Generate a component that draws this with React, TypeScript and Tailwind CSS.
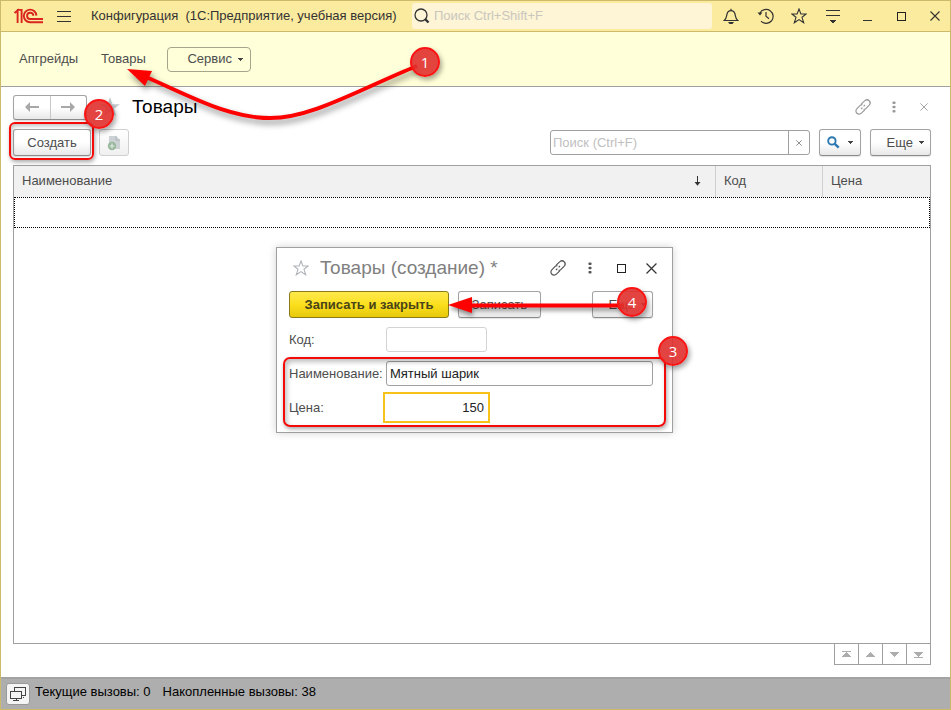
import { useState, type ReactNode } from "react";

const plainButton =
  "border border-[#a3a3a3] border-b-[#8c8c8c] rounded-[3px] bg-linear-to-b from-white from-50% to-[#e8e8e8] text-[#4d4d4d] shadow-[0_1px_1px_rgba(0,0,0,0.12)]";

function Caret() {
  return (
    <svg width="5" height="3" viewBox="0 0 5 3" shapeRendering="crispEdges">
      <path d="M0 0h5v1h-1v1h-1v1h-1v-1h-1v-1h-1z" fill="#444" />
    </svg>
  );
}

function LogoIcon() {
  return (
    <svg width="30" height="16" viewBox="0 0 30 16" fill="none" stroke="#d9241f" strokeWidth="1.9">
      <path d="M0.5 5 L3.6 2.4 V15" />
      <path d="M3 1.9 H7.6 V15" />
      <path d="M22.4 7.6 A6.3 6.3 0 1 0 16.2 14.2 H29" />
      <path d="M19.3 7.8 A3.1 3.1 0 1 0 16.2 11 H29" />
    </svg>
  );
}

function LinkIcon({ color }: { color: string }) {
  return (
    <svg width="16" height="16" viewBox="0 0 16 16" fill="none" stroke={color} strokeWidth="1.2">
      <path d="M6.2 5.2 L9.6 1.8 A2.8 2.8 0 0 1 14.2 6.2 L10.8 9.6 A2.6 2.6 0 0 1 8.6 10.3" />
      <path d="M9.8 10.8 L6.4 14.2 A2.8 2.8 0 0 1 1.8 9.8 L5.2 6.4 A2.6 2.6 0 0 1 7.4 5.7" />
      <path d="M6 10 L7.4 8.6 M8.6 7.4 L10 6" />
    </svg>
  );
}

function DotsIcon({ color }: { color: string }) {
  return (
    <svg width="4" height="12" viewBox="0 0 4 12" fill={color}>
      <rect x="0.5" y="0.5" width="3" height="2.6" rx="0.8" />
      <rect x="0.5" y="4.7" width="3" height="2.6" rx="0.8" />
      <rect x="0.5" y="8.9" width="3" height="2.6" rx="0.8" />
    </svg>
  );
}

function CrossIcon({ size, color }: { size: number; color: string }) {
  return (
    <svg width={size} height={size} viewBox="0 0 10 10" stroke={color} strokeWidth="1.1">
      <path d="M0.5 0.5 L9.5 9.5 M9.5 0.5 L0.5 9.5" />
    </svg>
  );
}

function StarOutline({ color }: { color: string }) {
  return (
    <svg width="16" height="16" viewBox="0 0 16 16" fill="none" stroke={color} strokeWidth="1.1">
      <path d="M8 1 L9.9 6 H15.2 L11 9.3 L12.7 14.8 L8 11.6 L3.3 14.8 L5 9.3 L0.8 6 H6.1 Z" />
    </svg>
  );
}

function Square() {
  return (
    <svg width="9" height="9" viewBox="0 0 9 9" fill="none" stroke="#222" shapeRendering="crispEdges">
      <rect x="0.5" y="0.5" width="8" height="8" />
    </svg>
  );
}

function BarButton({ label, children }: { label: string; children: ReactNode }) {
  return (
    <button type="button" aria-label={label} className="flex h-7 w-7 items-center justify-center">
      {children}
    </button>
  );
}

function Badge({ children, className }: { children: ReactNode; className: string }) {
  return (
    <span
      className={`pointer-events-none absolute z-20 flex h-[30px] w-[30px] items-center justify-center rounded-full border-2 border-[#fb1414] bg-[#e0302c]/90 font-['Open_Sans','Noto_Sans',sans-serif] text-[15px] text-white shadow-[2px_3px_5px_rgba(0,0,0,0.35)] ${className}`}
    >
      {children}
    </span>
  );
}

function TitleBar() {
  return (
    <header className="flex h-[31px] items-center border-b border-[#ccb96a] bg-[#fbeb9e] pr-px">
      <div className="flex w-[90px] items-center gap-[13px] pl-[13px]">
        <LogoIcon />
        <button type="button" aria-label="Меню">
          <svg width="14" height="11" viewBox="0 0 14 11" fill="#333" shapeRendering="crispEdges">
            <path d="M0 0h14v1H0zM0 5h14v1H0zM0 10h14v1H0z" />
          </svg>
        </button>
      </div>
      <h1 className="w-[321px] shrink-0 whitespace-pre text-[13px] text-[#333]">
        Конфигурация  (1С:Предприятие, учебная версия)
      </h1>
      <label className="flex h-[26px] min-w-0 flex-1 items-center gap-1 rounded-[3px] bg-[#fdf5d5] pl-[2px]">
        <svg width="16" height="16" viewBox="0 0 16 16" fill="none" stroke="#333">
          <circle cx="7" cy="7" r="6" strokeWidth="1.3" />
          <path d="M11 11 L14.5 14.5" strokeWidth="2.4" />
        </svg>
        <input
          aria-label="Поиск"
          placeholder="Поиск Ctrl+Shift+F"
          className="min-w-0 flex-1 bg-transparent text-[13px] outline-none placeholder:text-[#c9c6be]"
        />
      </label>
      <div className="ml-[5px] flex gap-1.5">
        <BarButton label="Уведомления">
          <svg width="16" height="17" viewBox="0 0 16 17" fill="none" stroke="#333" strokeWidth="1.2">
            <path d="M1.3 12.5 C3.6 10.6 3.4 8.4 4 6 C4.5 3.8 6 2.6 8 2.6 C10 2.6 11.5 3.8 12 6 C12.6 8.4 12.4 10.6 14.7 12.5 Z" />
            <path d="M8 0.8 V2.5" />
            <path d="M5 14 H11 L9.5 16 H6.5 Z" fill="#333" stroke="none" />
          </svg>
        </BarButton>
        <BarButton label="История">
          <svg width="17" height="16" viewBox="0 0 17 16" fill="none" stroke="#333" strokeWidth="1.2">
            <path d="M3 5 A7 7 0 1 1 4 13.2" />
            <path d="M9 4 V8.3 L12 10.8" />
            <path d="M0.5 4.5 H5.5 L3 7.5 Z" fill="#333" stroke="none" />
          </svg>
        </BarButton>
        <BarButton label="Избранное">
          <StarOutline color="#333" />
        </BarButton>
        <BarButton label="Настройки">
          <svg width="14" height="13" viewBox="0 0 14 13" fill="#333" shapeRendering="crispEdges">
            <path d="M0 0h14v1H0zM0 5h14v1H0zM4 10h6v1h-1v1h-1v1h-2v-1h-1v-1h-1z" />
          </svg>
        </BarButton>
        <BarButton label="Свернуть">
          <span className="mt-2 h-px w-[9px] bg-[#333]" />
        </BarButton>
        <BarButton label="Развернуть">
          <Square />
        </BarButton>
        <BarButton label="Закрыть">
          <CrossIcon size={10} color="#333" />
        </BarButton>
      </div>
    </header>
  );
}

function SectionBar() {
  return (
    <nav className="flex h-[55px] items-center border-b border-[#a0a0a0] bg-[#ffffd9] pl-[18px] text-[#4d4d4d]">
      <a href="#upgrades" className="w-[82px]">Апгрейды</a>
      <a href="#goods" className="w-[66px]">Товары</a>
      <button
        type="button"
        className="flex h-[25px] w-[84px] items-center justify-end gap-1.5 rounded-[4px] border border-[#a5a58c] pr-[7px]"
      >
        Сервис
        <Caret />
      </button>
    </nav>
  );
}

function Toolbar() {
  return (
    <div className="flex items-center">
      <div className="relative">
        <button type="button" className={`h-[27px] w-[78px] ${plainButton}`}>
          Создать
        </button>
        <span className="pointer-events-none absolute -top-[7px] -right-[3px] -bottom-1 -left-1 rounded-[6px] border-2 border-[#f50a0a] shadow-[1px_2px_4px_rgba(0,0,0,0.35),inset_1px_2px_4px_rgba(0,0,0,0.25)]" />
        <Badge className="-top-[30px] left-[71px]">2</Badge>
      </div>
      <button
        type="button"
        aria-label="Создать копированием"
        className="ml-2 flex h-[27px] w-[30px] items-center justify-center rounded-[3px] border border-[#cfcfcf] bg-linear-to-b from-white to-[#f0f0f0]"
      >
        <svg width="14" height="16" viewBox="0 0 14 16">
          <path d="M2 1 H9 L13 5 V14 H2 Z" fill="#ccd1d3" />
          <path d="M9 1 V5 H13" fill="none" stroke="#aeb5b8" />
          <circle cx="5" cy="11" r="4.2" fill="#98b79c" />
          <path d="M5 8.5 V13.5 M2.5 11 H7.5" stroke="#e2ece3" strokeWidth="1.2" />
        </svg>
      </button>
      <div className="ml-auto flex h-[25px] w-[260px] rounded-[3px] border border-[#a0a0a0] bg-white">
        <input
          aria-label="Поиск в списке"
          placeholder="Поиск (Ctrl+F)"
          className="min-w-0 flex-1 pl-0.5 outline-none placeholder:text-[#c0c0c0]"
        />
        <button
          type="button"
          aria-label="Очистить"
          className="flex w-[21px] items-center justify-center border-l border-[#a0a0a0]"
        >
          <CrossIcon size={6} color="#555" />
        </button>
      </div>
      <button
        type="button"
        aria-label="Найти"
        className={`ml-[9px] flex h-[27px] w-[42px] items-center justify-center gap-2 ${plainButton}`}
      >
        <svg width="13" height="13" viewBox="0 0 13 13" fill="none" stroke="#2b78b0">
          <circle cx="4.9" cy="4.9" r="3.7" strokeWidth="1.9" />
          <path d="M7.8 7.8 L11.7 11.7" strokeWidth="2.4" />
        </svg>
        <Caret />
      </button>
      <MoreButton className="ml-[9px]" />
    </div>
  );
}

function MoreButton({ className }: { className: string }) {
  return (
    <button
      type="button"
      className={`flex h-[27px] w-[61px] items-center justify-end gap-1.5 pr-1.5 ${plainButton} ${className}`}
    >
      Еще
      <Caret />
    </button>
  );
}

const scrollIcons = [
  { label: "В начало", d: "M2 0h9v1H2zM6 1h1v1h1v1h1v1h1v1h1v1H2v-1h1v-1h1v-1h1v-1h1z" },
  { label: "Вверх", d: "M6 1h1v1h1v1h1v1h1v1h1v1H2v-1h1v-1h1v-1h1v-1h1z" },
  { label: "Вниз", d: "M2 1h9v1h-1v1h-1v1h-1v1h-1v1H6v-1h-1v-1h-1v-1h-1v-1H2z" },
  { label: "В конец", d: "M2 1h9v1h-1v1h-1v1h-1v1h-1v1H6v-1h-1v-1h-1v-1h-1v-1H2zM2 6h9v1H2z" },
];

function GoodsTable() {
  return (
    <div className="mt-[9px] flex flex-1 flex-col">
      <div className="flex-1 border border-[#a0a0a0]">
        <table className="w-full table-fixed border-separate border-spacing-0 text-left text-[#4d4d4d]">
          <thead>
            <tr className="h-[31px] bg-[#f1f1f1]">
              <th className="pb-0.5 pl-2 font-normal">
                <span className="flex items-center justify-between pr-3.5">
                  Наименование
                  <svg width="7" height="10" viewBox="0 0 7 10">
                    <path d="M3 0h1v6h2.5L3.5 9.8 0.5 6H3z" fill="#333" />
                  </svg>
                </span>
              </th>
              <th className="w-[107px] border-l border-[#cfcfcf] pb-0.5 pl-2 font-normal">Код</th>
              <th className="w-[108px] border-l border-[#cfcfcf] pb-0.5 pl-2 font-normal">Цена</th>
            </tr>
          </thead>
          <tbody>
            <tr className="h-[31px]">
              <td colSpan={3} className="border border-dotted border-black" />
            </tr>
          </tbody>
        </table>
      </div>
      <div className="-mt-px flex self-end border-l border-[#a0a0a0]">
        {scrollIcons.map((icon) => (
          <button
            key={icon.label}
            type="button"
            aria-label={icon.label}
            className="flex h-[22px] w-6 items-center justify-center border border-l-0 border-[#a0a0a0] bg-white"
          >
            <svg width="13" height="7" viewBox="0 0 13 7" fill="#adadad" shapeRendering="crispEdges">
              <path d={icon.d} />
            </svg>
          </button>
        ))}
      </div>
    </div>
  );
}

function CreateDialog() {
  const [name, setName] = useState("Мятный шарик");
  const [price, setPrice] = useState("150");
  return (
    <section
      role="dialog"
      aria-label="Товары (создание)"
      className="absolute top-[246px] left-[275px] w-[397px] border border-[#a0a0a0] bg-white px-3 pb-[5px] text-[#4d4d4d] shadow-[0_0_8px_rgba(0,0,0,0.18)]"
    >
      <div className="mb-[3px] flex h-10 items-center pr-[3px]">
        <button type="button" aria-label="В избранное" className="ml-1 flex w-[27px]">
          <StarOutline color="#b0b5ba" />
        </button>
        <h3 className="mr-auto text-[19px] text-[#808080]">Товары (создание) *</h3>
        <button type="button" aria-label="Ссылка" className="mr-[22px]"><LinkIcon color="#555" /></button>
        <button type="button" aria-label="Действия" className="mr-[25px]"><DotsIcon color="#555" /></button>
        <button type="button" aria-label="Развернуть" className="mr-5"><Square /></button>
        <button type="button" aria-label="Закрыть"><CrossIcon size={11} color="#333" /></button>
      </div>
      <div className="flex pr-[7px]">
        <button
          type="button"
          className="h-[27px] w-40 rounded-[3px] border border-[#8a7a1c] bg-linear-to-b from-[#ffe94a] via-[#fbdf1c] to-[#e8c90c] font-bold text-[#4a4418]"
        >
          Записать и закрыть
        </button>
        <button type="button" className={`ml-[9px] h-[27px] w-[83px] ${plainButton}`}>Записать</button>
        <MoreButton className="ml-auto" />
      </div>
      <div className="flex h-[43px] items-center">
        <label htmlFor="code" className="w-[97px]">Код:</label>
        <input id="code" className="h-[25px] w-[101px] rounded-[3px] border border-[#d3d3d3] px-1 outline-none" />
      </div>
      <div className="relative -mx-[6px] h-[66px] px-[6px]">
        <div className="flex h-[25px] items-center">
          <label htmlFor="name" className="w-[97px] shrink-0">Наименование:</label>
          <input
            id="name"
            value={name}
            onChange={(event) => setName(event.target.value)}
            className="mr-[7px] h-[25px] min-w-0 flex-1 rounded-[3px] border border-[#a0a0a0] px-[3px] text-[#222] outline-none"
          />
        </div>
        <div className="mt-1.5 flex items-center">
          <label htmlFor="price" className="w-[94px]">Цена:</label>
          <input
            id="price"
            value={price}
            onChange={(event) => setPrice(event.target.value)}
            className="h-[31px] w-[107px] border-2 border-[#f7c31b] px-1 text-right text-[#222] outline-none"
          />
        </div>
        <span className="pointer-events-none absolute -top-1 right-0 bottom-0 left-0 rounded-[7px] border-2 border-[#f50a0a] shadow-[1px_2px_4px_rgba(0,0,0,0.35),inset_2px_3px_5px_rgba(0,0,0,0.25)]" />
      </div>
      <svg
        className="pointer-events-none absolute top-[45px] left-[171px] drop-shadow-[1px_3px_2px_rgba(0,0,0,0.45)]"
        width="184"
        height="24"
        viewBox="0 0 184 24"
      >
        <path d="M18 12.5 H176" stroke="#f00" strokeWidth="4" />
        <path d="M0 12 L24 4 V20 Z" fill="#f00" />
      </svg>
      <Badge className="top-[39px] left-[340px]">4</Badge>
      <Badge className="top-[88px] left-[381px]">3</Badge>
    </section>
  );
}

function StatusBar() {
  return (
    <footer className="flex h-8 items-center bg-[#aeaeae] pl-[5px] text-black shadow-[inset_0_2px_0_#a3a3a3]">
      <button
        type="button"
        aria-label="Окна"
        className="mt-0.5 flex h-[22px] w-6 items-center justify-center rounded-[3px] border border-[#999] bg-[#f4f4f4]"
      >
        <svg width="16" height="14" viewBox="0 0 16 14" fill="none" stroke="#444" shapeRendering="crispEdges">
          <path d="M4.5 4 V0.5 H15.5 V8.5 H12 M13 10.5 H14" />
          <rect x="0.5" y="4.5" width="11" height="7" />
          <path d="M6 12 V13.5 M3 13.5 H9" />
        </svg>
      </button>
      <p className="ml-[5px] pb-0.5">Текущие вызовы: 0</p>
      <p className="ml-3 pb-0.5">Накопленные вызовы: 38</p>
    </footer>
  );
}

export default function App() {
  return (
    <div className="relative flex min-h-screen flex-col border border-[#ccb96a] bg-white font-['Liberation_Sans',Arial,sans-serif] text-[13px] leading-4">
      <TitleBar />
      <SectionBar />
      <main className="flex flex-1 flex-col pr-[19px] pb-3 pl-3">
        <div className="mb-0.5 flex h-10 items-center">
          <div className={`flex h-[25px] w-[74px] ${plainButton}`}>
            <button type="button" aria-label="Назад" className="flex flex-1 items-center justify-center border-r border-[#c8c8c8]">
              <svg width="14" height="10" viewBox="0 0 14 10" fill="#a8a8a8">
                <path d="M0 5 L5 0 V4 H14 V6 H5 V10 Z" />
              </svg>
            </button>
            <button type="button" aria-label="Вперед" className="flex flex-1 items-center justify-center">
              <svg width="14" height="10" viewBox="0 0 14 10" fill="#a8a8a8">
                <path d="M14 5 L9 0 V4 H0 V6 H9 V10 Z" />
              </svg>
            </button>
          </div>
          <button type="button" aria-label="В избранное" className="mr-3 ml-[13px]">
            <svg width="20" height="20" viewBox="0 0 16 16" fill="#c6cacd">
              <path d="M8 0 L10 5.8 H16 L11.2 9.4 L13 15.4 L8 11.8 L3 15.4 L4.8 9.4 L0 5.8 H6 Z" />
            </svg>
          </button>
          <h2 className="mr-auto text-[19px] text-black">Товары</h2>
          <button type="button" aria-label="Ссылка" className="mr-[21px]"><LinkIcon color="#999" /></button>
          <button type="button" aria-label="Действия" className="mr-6"><DotsIcon color="#999" /></button>
          <button type="button" aria-label="Закрыть" className="mr-[3px]"><CrossIcon size={8} color="#999" /></button>
        </div>
        <Toolbar />
        <GoodsTable />
      </main>
      <StatusBar />
      <CreateDialog />
      <svg
        className="pointer-events-none absolute top-[57px] left-[119px] drop-shadow-[2px_4px_3px_rgba(0,0,0,0.45)]"
        width="310"
        height="75"
        viewBox="0 0 310 75"
      >
        <path d="M26 19 C70 38 108 60 150 60 C192 60 240 31 297 8" fill="none" stroke="#f00" strokeWidth="4" />
        <path d="M7 11 L32 13 L25 28 Z" fill="#f00" />
      </svg>
      <Badge className="top-[46px] left-[409px]">1</Badge>
    </div>
  );
}
